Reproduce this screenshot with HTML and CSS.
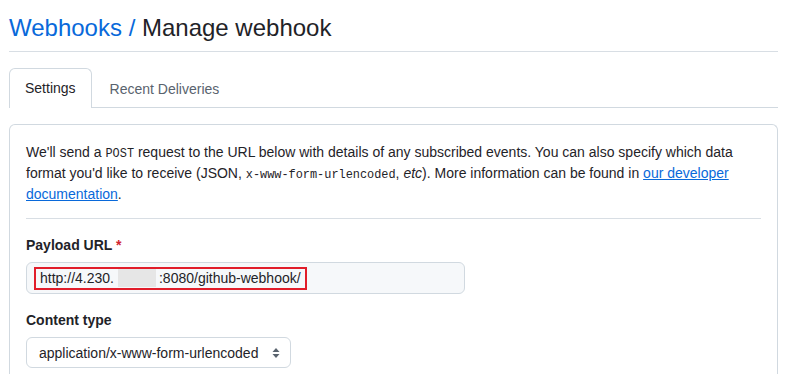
FILE: index.html
```html
<!DOCTYPE html>
<html lang="en">
<head>
  <meta charset="UTF-8"/>
  <meta name="viewport" content="width=device-width, initial-scale=1.0"/>
  <title>Manage webhook</title>
  <link rel="stylesheet" href="styles.css">
</head>
<body>
  <div class="container">
    <div class="page-head">
      <h1><a href="#" class="crumb">Webhooks /</a> Manage webhook</h1>
    </div>

    <div class="tabs">
      <button class="tab active">Settings</button>
      <button class="tab">Recent Deliveries</button>
    </div>

    <div class="box">
      <p class="intro">
        We'll send a <code>POST</code> request to the URL below with details of any subscribed events. You can also specify which data format you'd like to receive (JSON, <code>x-www-form-urlencoded</code>, <em>etc</em>). More information can be found in <a href="#" class="link">our developer documentation</a>.
      </p>

      <div class="field">
        <label>Payload URL <span class="req">*</span></label>
        <div class="input">
          <span class="marked">http://4.230.<span class="hidden-ip"></span>:8080/github-webhook/</span>
        </div>
      </div>

      <div class="field">
        <label>Content type</label>
        <div class="select">
          <span>application/x-www-form-urlencoded</span>
          <svg class="caret" width="8" height="12" viewBox="0 0 8 12">
            <path d="M4 1 L7.5 5 H0.5 Z" fill="#59636e"/>
            <path d="M4 11 L7.5 7 H0.5 Z" fill="#59636e"/>
          </svg>
        </div>
      </div>
    </div>
  </div>
</body>
</html>
```
FILE: styles.css
```css
body {
  font-family: 'Liberation Sans', Arial, sans-serif;
  font-size: 14px;
  color: #1f2328;
  background-color: #fff;
  margin: 0;
  padding: 0;
}

.container {
  width: 769px;
  margin-left: 9px;
}

.page-head {
  padding: 10px 0 5px;
  border-bottom: 1px solid #d8dee4;
}

h1 {
  margin: 0;
  font-size: 24px;
  font-weight: normal;
  line-height: 36px;
}

.crumb {
  color: #0969da;
  text-decoration: none;
}

.tabs {
  display: flex;
  margin-top: 16px;
  border-bottom: 1px solid #d1d9e0;
}

.tab {
  font-family: inherit;
  font-size: 14px;
  color: #59636e;
  background: none;
  border: 1px solid transparent;
  border-bottom: none;
  border-radius: 6px 6px 0 0;
  padding: 0 15px;
  margin-right: 2px;
  line-height: 38px;
  margin-bottom: -1px;
  cursor: pointer;
}

.tab.active {
  color: #1f2328;
  background: #fff;
  border-color: #d1d9e0;
  padding-bottom: 1px;
}

.box {
  margin-top: 16px;
  border: 1px solid #d1d9e0;
  border-bottom: none;
  border-radius: 6px 6px 0 0;
  padding: 17px 16px 0;
  height: 240px;
}

.intro {
  margin: 0;
  line-height: 21px;
  padding-bottom: 13px;
  border-bottom: 1px solid #d8dee4;
}

code {
  font-family: 'Liberation Mono', monospace;
  font-size: 11.9px;
  line-height: 1;
}

.link {
  color: #0969da;
}

.field {
  margin-top: 16px;
}

label {
  display: block;
  font-weight: bold;
  line-height: 21px;
  margin-bottom: 6px;
}

.req {
  color: #d1242f;
}

.input {
  box-sizing: border-box;
  width: 439px;
  height: 32px;
  display: flex;
  align-items: center;
  padding: 0 7px;
  background: #f6f8fa;
  border: 1px solid #d1d9e0;
  border-radius: 6px;
}

.marked {
  display: flex;
  align-items: center;
  height: 19px;
  padding: 0 4px;
  border: 2px solid #e11d2a;
  white-space: nowrap;
}

.hidden-ip {
  display: inline-block;
  width: 38px;
  height: 18px;
  background: #e6e6e6;
  margin: 0 3px 0 4px;
}

.select {
  box-sizing: border-box;
  display: inline-flex;
  align-items: center;
  gap: 14px;
  height: 31px;
  padding: 0 10px 0 12px;
  border: 1px solid #d1d9e0;
  border-radius: 6px;
  background: #fff;
}
```
